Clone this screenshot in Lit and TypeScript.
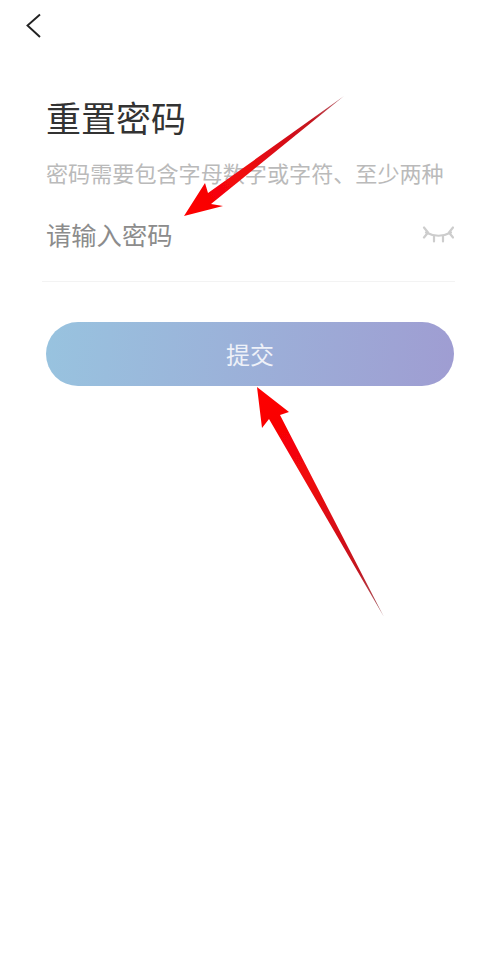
import { LitElement, html, css } from "lit";
import { customElement } from "lit/decorators.js";

@customElement("app-root")
export class AppRoot extends LitElement {
  static styles = css`
    :host {
      display: block;
      position: relative;
      width: 500px;
      height: 957px;
      background: #fff;
      overflow: hidden;
      font-family: "Noto Sans CJK SC", "Liberation Sans", sans-serif;
    }
    .page {
      display: flex;
      flex-direction: column;
      padding: 12px 46px 0;
    }
    .back {
      display: block;
      width: 26px;
      height: 28px;
      margin-left: -22px;
    }
    .title {
      margin: 54px 0 0 0;
      font-size: 35px;
      line-height: 46px;
      font-weight: 400;
      color: #333;
    }
    .hint {
      margin: 17px 0 0 0;
      font-size: 22.1px;
      line-height: 30px;
      color: #bababa;
      white-space: nowrap;
    }
    .field {
      display: flex;
      align-items: center;
      justify-content: space-between;
      margin: 0 -1px 0 -4px;
      padding: 29px 0 28px 4px;
      border-bottom: 1px solid #f3f3f3;
    }
    .placeholder {
      font-size: 25.3px;
      line-height: 37px;
      color: #8c8c8c;
    }
    .eye {
      width: 34px;
      height: 20px;
      margin-right: 1px;
    }
    .submit {
      display: flex;
      align-items: center;
      justify-content: center;
      height: 64px;
      box-sizing: border-box;
      padding-bottom: 2px;
      margin-top: 40px;
      border-radius: 32px;
      background: linear-gradient(95deg, #98c3df 0%, #9f9dd2 100%);
      color: #eef1f8;
      font-size: 24px;
    }
    .arrows {
      position: absolute;
      inset: 0;
      width: 500px;
      height: 957px;
      pointer-events: none;
    }
  `;

  render() {
    return html`
      <div class="page">
        <svg class="back" viewBox="0 0 26 28">
          <path d="M16 2.5 L3.5 13.5 L16 25" fill="none" stroke="#222" stroke-width="1.9" />
        </svg>
        <h1 class="title">重置密码</h1>
        <div class="hint">密码需要包含字母数字或字符、至少两种</div>
        <div class="field">
          <span class="placeholder">请输入密码</span>
          <svg class="eye" viewBox="0 0 34 20">
            <g fill="none" stroke="#cdcdcd" stroke-width="2.2" stroke-linecap="round">
              <path d="M6 7.5 Q18.5 14 31 7.5" />
              <path d="M4 2.5 L8 7.5 M4 12.5 L8 7.5 M33 2.5 L29 7.5 M33 12.5 L29 7.5" />
              <path d="M14 11.5 L14 16.5 M23 11.5 L23 16.5" />
            </g>
          </svg>
        </div>
        <div class="submit">提交</div>
      </div>
      <svg class="arrows" viewBox="0 0 500 957">
        <defs>
          <filter id="soft" x="-10%" y="-10%" width="120%" height="120%">
            <feGaussianBlur stdDeviation="0.7" />
          </filter>
          <linearGradient id="a1" x1="343" y1="96" x2="184" y2="216" gradientUnits="userSpaceOnUse">
            <stop offset="0" stop-color="#b9737c" />
            <stop offset="0.2" stop-color="#c4141f" />
            <stop offset="0.6" stop-color="#ee0a0f" />
            <stop offset="1" stop-color="#ff0000" />
          </linearGradient>
          <linearGradient id="a2" x1="383" y1="616" x2="257" y2="387" gradientUnits="userSpaceOnUse">
            <stop offset="0" stop-color="#a5666c" />
            <stop offset="0.2" stop-color="#c4141f" />
            <stop offset="0.6" stop-color="#f0080c" />
            <stop offset="1" stop-color="#ff0000" />
          </linearGradient>
        </defs>
        <polygon filter="url(#soft)" fill="url(#a1)" points="344,96 211,204 223,206 184,216 205,183 208,193" />
        <polygon filter="url(#soft)" fill="url(#a2)" points="384,617 280,415 289,412 257,387 262,428 269,419" />
      </svg>
    `;
  }
}
